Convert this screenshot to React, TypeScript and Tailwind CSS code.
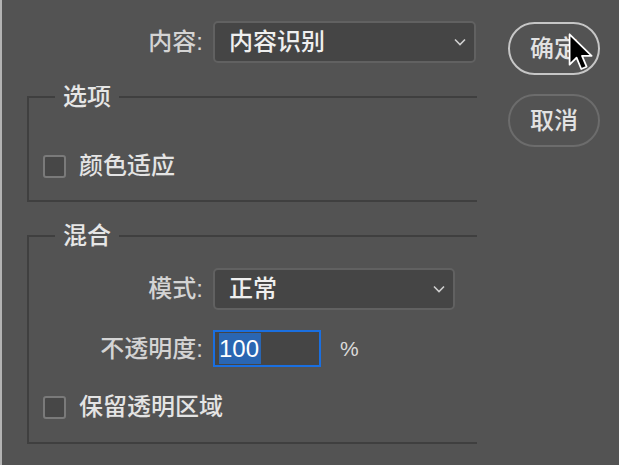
import React from 'react'

const FONT = '"Liberation Sans", "Noto Sans CJK SC", sans-serif'

function Chevron({ className }: { className?: string }) {
  return (
    <svg width="12" height="8" viewBox="0 0 12 8" className={className}>
      <path d="M1 1.5 L6 6.5 L11 1.5" fill="none" stroke="#cfcfcf" strokeWidth="1.6" />
    </svg>
  )
}

function Select({ value, width }: { value: string; width: string }) {
  return (
    <div
      className={`flex h-[42px] items-center justify-between rounded-[5px] border-2 border-[#616161] bg-[#454545] pl-[14px] pr-[8px] ${width}`}
    >
      <span className="text-[24px] font-medium leading-none text-[#efefef]">{value}</span>
      <Chevron />
    </div>
  )
}

function Checkbox({ label }: { label: string }) {
  return (
    <div className="flex items-center gap-[13px] pl-[14px]">
      <span className="h-[23px] w-[23px] rounded-[3px] border-2 border-[#7a7a7a] bg-[#474747]" />
      <span className="text-[24px] font-medium leading-none text-[#e4e4e4]">{label}</span>
    </div>
  )
}

function Cursor() {
  return (
    <svg
      width="26"
      height="38"
      viewBox="0 0 20 30"
      className="absolute left-[566px] top-[33px]"
    >
      <path
        d="M1 1 L1 25 L6.5 19.5 L10.2 28.4 L14.4 26.6 L10.8 18 L18.4 18 Z"
        fill="#000"
        stroke="#fff"
        strokeWidth="1.4"
        strokeLinejoin="round"
      />
    </svg>
  )
}

export default function App() {
  return (
    <div
      className="relative flex h-[465px] w-[619px] overflow-hidden border-l-2 border-[#b3b3b3] bg-[#535353]"
      style={{ fontFamily: FONT }}
    >
      <div className="flex w-[475px] flex-col pl-[25px] pt-[21px]">
        <div className="flex items-center">
          <span className="w-[176px] text-right text-[24px] font-medium leading-none text-[#d4d4d4]">内容:</span>
          <div className="ml-[10px]">
            <Select value="内容识别" width="w-[263px]" />
          </div>
        </div>

        <fieldset className="mt-[22px] h-[117px] border-y-2 border-l-2 border-[#3f3f3f]">
          <legend className="ml-[26px] px-[8px] text-[24px] font-medium leading-[24px] text-[#e6e6e6]">选项</legend>
          <div className="mt-[45px]">
            <Checkbox label="颜色适应" />
          </div>
        </fieldset>

        <fieldset className="mt-[22px] h-[220px] border-y-2 border-l-2 border-[#3f3f3f]">
          <legend className="ml-[26px] px-[8px] text-[24px] font-medium leading-[24px] text-[#e6e6e6]">混合</legend>
          <div className="mt-[20px] flex items-center">
            <span className="w-[174px] text-right text-[24px] font-medium leading-none text-[#d4d4d4]">模式:</span>
            <div className="ml-[10px]">
              <Select value="正常" width="w-[242px]" />
            </div>
          </div>
          <div className="mt-[20px] flex items-center">
            <span className="w-[174px] text-right text-[24px] font-medium leading-none text-[#d4d4d4]">不透明度:</span>
            <div className="ml-[10px] flex h-[37px] w-[108px] items-stretch border-2 border-[#1a6fe0] bg-[#454545] py-[1px] pl-[4px]">
              <span className="flex items-center bg-[#2a66b2] pr-[2px] text-[24px] leading-none text-white">100</span>
            </div>
            <span className="ml-[19px] text-[21px] leading-none text-[#dadada]">%</span>
          </div>
          <div className="mt-[28px]">
            <Checkbox label="保留透明区域" />
          </div>
        </fieldset>
      </div>

      <div className="ml-[31px] flex flex-col gap-[19px] pt-[22px]">
        <button className="flex h-[53px] w-[92px] items-center justify-center rounded-full border-2 border-[#c6c6c6] text-[24px] font-medium leading-none text-[#e2e2e2]">
          确定
        </button>
        <button className="flex h-[53px] w-[92px] items-center justify-center rounded-full border-2 border-[#6c6c6c] text-[24px] font-medium leading-none text-[#e2e2e2]">
          取消
        </button>
      </div>

      <Cursor />
    </div>
  )
}
